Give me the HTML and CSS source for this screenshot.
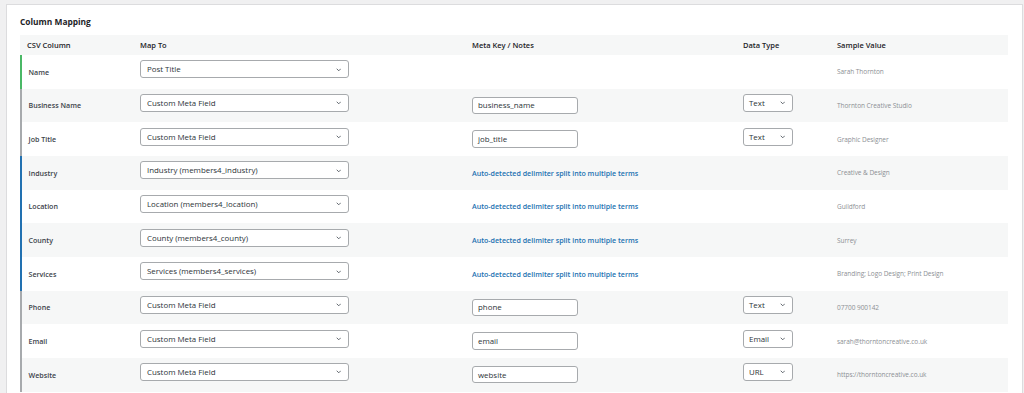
FILE: index.html
```html
<!DOCTYPE html>
<html lang="en">
<head>
<meta charset="utf-8">
<title>Column Mapping</title>
<link rel="stylesheet" href="styles.css">
</head>
<body>
<div class="card">
  <h2 class="card-title">Column Mapping</h2>
  <table class="map">
    <colgroup>
      <col class="c-csv"><col class="c-map"><col class="c-meta"><col class="c-type"><col class="c-sample">
    </colgroup>
    <thead>
      <tr><th>CSV Column</th><th>Map To</th><th>Meta Key / Notes</th><th>Data Type</th><th>Sample Value</th></tr>
    </thead>
    <tbody>
      <tr class="core">
        <td class="label">Name</td>
        <td><span class="sel wide"><span class="val">Post Title</span><svg class="chev" viewBox="0 0 8 5"><path d="M1 1l3 3 3-3"/></svg></span></td>
        <td></td><td></td>
        <td class="sample">Sarah Thornton</td>
      </tr>
      <tr class="meta">
        <td class="label">Business Name</td>
        <td><span class="sel wide"><span class="val">Custom Meta Field</span><svg class="chev" viewBox="0 0 8 5"><path d="M1 1l3 3 3-3"/></svg></span></td>
        <td><span class="inp">business_name</span></td>
        <td><span class="sel narrow"><span class="val">Text</span><svg class="chev" viewBox="0 0 8 5"><path d="M1 1l3 3 3-3"/></svg></span></td>
        <td class="sample">Thornton Creative Studio</td>
      </tr>
      <tr class="meta">
        <td class="label">Job Title</td>
        <td><span class="sel wide"><span class="val">Custom Meta Field</span><svg class="chev" viewBox="0 0 8 5"><path d="M1 1l3 3 3-3"/></svg></span></td>
        <td><span class="inp">job_title</span></td>
        <td><span class="sel narrow"><span class="val">Text</span><svg class="chev" viewBox="0 0 8 5"><path d="M1 1l3 3 3-3"/></svg></span></td>
        <td class="sample">Graphic Designer</td>
      </tr>
      <tr class="tax">
        <td class="label">Industry</td>
        <td><span class="sel wide"><span class="val">Industry (members4_industry)</span><svg class="chev" viewBox="0 0 8 5"><path d="M1 1l3 3 3-3"/></svg></span></td>
        <td class="note">Auto-detected delimiter split into multiple terms</td>
        <td></td>
        <td class="sample">Creative &amp; Design</td>
      </tr>
      <tr class="tax">
        <td class="label">Location</td>
        <td><span class="sel wide"><span class="val">Location (members4_location)</span><svg class="chev" viewBox="0 0 8 5"><path d="M1 1l3 3 3-3"/></svg></span></td>
        <td class="note">Auto-detected delimiter split into multiple terms</td>
        <td></td>
        <td class="sample">Guildford</td>
      </tr>
      <tr class="tax">
        <td class="label">County</td>
        <td><span class="sel wide"><span class="val">County (members4_county)</span><svg class="chev" viewBox="0 0 8 5"><path d="M1 1l3 3 3-3"/></svg></span></td>
        <td class="note">Auto-detected delimiter split into multiple terms</td>
        <td></td>
        <td class="sample">Surrey</td>
      </tr>
      <tr class="tax">
        <td class="label">Services</td>
        <td><span class="sel wide"><span class="val">Services (members4_services)</span><svg class="chev" viewBox="0 0 8 5"><path d="M1 1l3 3 3-3"/></svg></span></td>
        <td class="note">Auto-detected delimiter split into multiple terms</td>
        <td></td>
        <td class="sample">Branding; Logo Design; Print Design</td>
      </tr>
      <tr class="meta">
        <td class="label">Phone</td>
        <td><span class="sel wide"><span class="val">Custom Meta Field</span><svg class="chev" viewBox="0 0 8 5"><path d="M1 1l3 3 3-3"/></svg></span></td>
        <td><span class="inp">phone</span></td>
        <td><span class="sel narrow"><span class="val">Text</span><svg class="chev" viewBox="0 0 8 5"><path d="M1 1l3 3 3-3"/></svg></span></td>
        <td class="sample">07700 900142</td>
      </tr>
      <tr class="meta">
        <td class="label">Email</td>
        <td><span class="sel wide"><span class="val">Custom Meta Field</span><svg class="chev" viewBox="0 0 8 5"><path d="M1 1l3 3 3-3"/></svg></span></td>
        <td><span class="inp">email</span></td>
        <td><span class="sel narrow"><span class="val">Email</span><svg class="chev" viewBox="0 0 8 5"><path d="M1 1l3 3 3-3"/></svg></span></td>
        <td class="sample">sarah@thorntoncreative.co.uk</td>
      </tr>
      <tr class="meta">
        <td class="label">Website</td>
        <td><span class="sel wide"><span class="val">Custom Meta Field</span><svg class="chev" viewBox="0 0 8 5"><path d="M1 1l3 3 3-3"/></svg></span></td>
        <td><span class="inp">website</span></td>
        <td><span class="sel narrow"><span class="val">URL</span><svg class="chev" viewBox="0 0 8 5"><path d="M1 1l3 3 3-3"/></svg></span></td>
        <td class="sample">https://thorntoncreative.co.uk</td>
      </tr>
    </tbody>
  </table>
</div>
</body>
</html>
```

FILE: styles.css
```css
* { box-sizing: border-box; }
html, body { margin: 0; padding: 0; }
body {
  background: #f0f0f1;
  font-family: "Open Sans", "Noto Sans", sans-serif;
  color: #1d2327;
  height: 393px;
  overflow: hidden;
}
.card {
  margin: 4px 1px 0 6px;
  background: #fff;
  border: 1px solid #dcdcde;
  border-bottom: none;
  padding: 0 14px 0 13px;
  height: 400px;
}
.card-title {
  margin: 0;
  padding: 10px 0 6px;
  font-size: 8.4px;
  line-height: 14px;
  font-weight: 700;
  color: #1d2327;
}
.map {
  width: 100%;
  border-collapse: separate;
  border-spacing: 0;
  table-layout: fixed;
}
.c-csv { width: 114px; }
.c-map { width: 332px; }
.c-meta { width: 271px; }
.c-type { width: 94px; }
.map th {
  background: #f6f7f7;
  height: 20px;
  padding: 0 6px;
  text-align: left;
  font-size: 7.5px;
  font-weight: 600;
  color: #1d2327;
}
.map th:first-child { padding-left: 7px; }
.map td {
  height: 33.67px;
  padding: 0 6px;
  vertical-align: middle;
  font-size: 7.4px;
  white-space: nowrap;
}
.map tbody tr:nth-child(even) td { background: #f6f7f7; }
.map td.label {
  border-left: 2.5px solid #a7aaad;
  padding-left: 6.5px;
  font-size: 7.1px;
  font-weight: 600;
  color: #3c434a;
}
.core td.label { border-left-color: #4ab866; }
.tax td.label { border-left-color: #2271b1; }
.meta td.label { border-left-color: #a7aaad; }

.sel {
  display: inline-flex;
  align-items: center;
  justify-content: space-between;
  height: 18px;
  border: 1px solid #a7aaad;
  border-radius: 3px;
  background: #fff;
  padding: 0 7px 0 6px;
  font-size: 7.9px;
  color: #2c3338;
  vertical-align: middle;
  margin-bottom: 5px;
}
.sel.wide { width: 209px; }
.sel.narrow { width: 50px; padding-left: 5px; }
.chev {
  width: 5.5px;
  height: 3.5px;
  fill: none;
  stroke: #50575e;
  stroke-width: 1.3;
}
.inp {
  display: inline-flex;
  align-items: center;
  width: 106px;
  height: 17.5px;
  border: 1px solid #a7aaad;
  border-radius: 3px;
  background: #fff;
  padding: 0 5px;
  font-size: 7.9px;
  color: #2c3338;
  vertical-align: middle;
}
.note {
  color: #2271b1;
  font-weight: 600;
  font-size: 7.1px !important;
}
.sample {
  color: #8c8f94;
  font-size: 6.5px !important;
  letter-spacing: -0.05px;
}
```
